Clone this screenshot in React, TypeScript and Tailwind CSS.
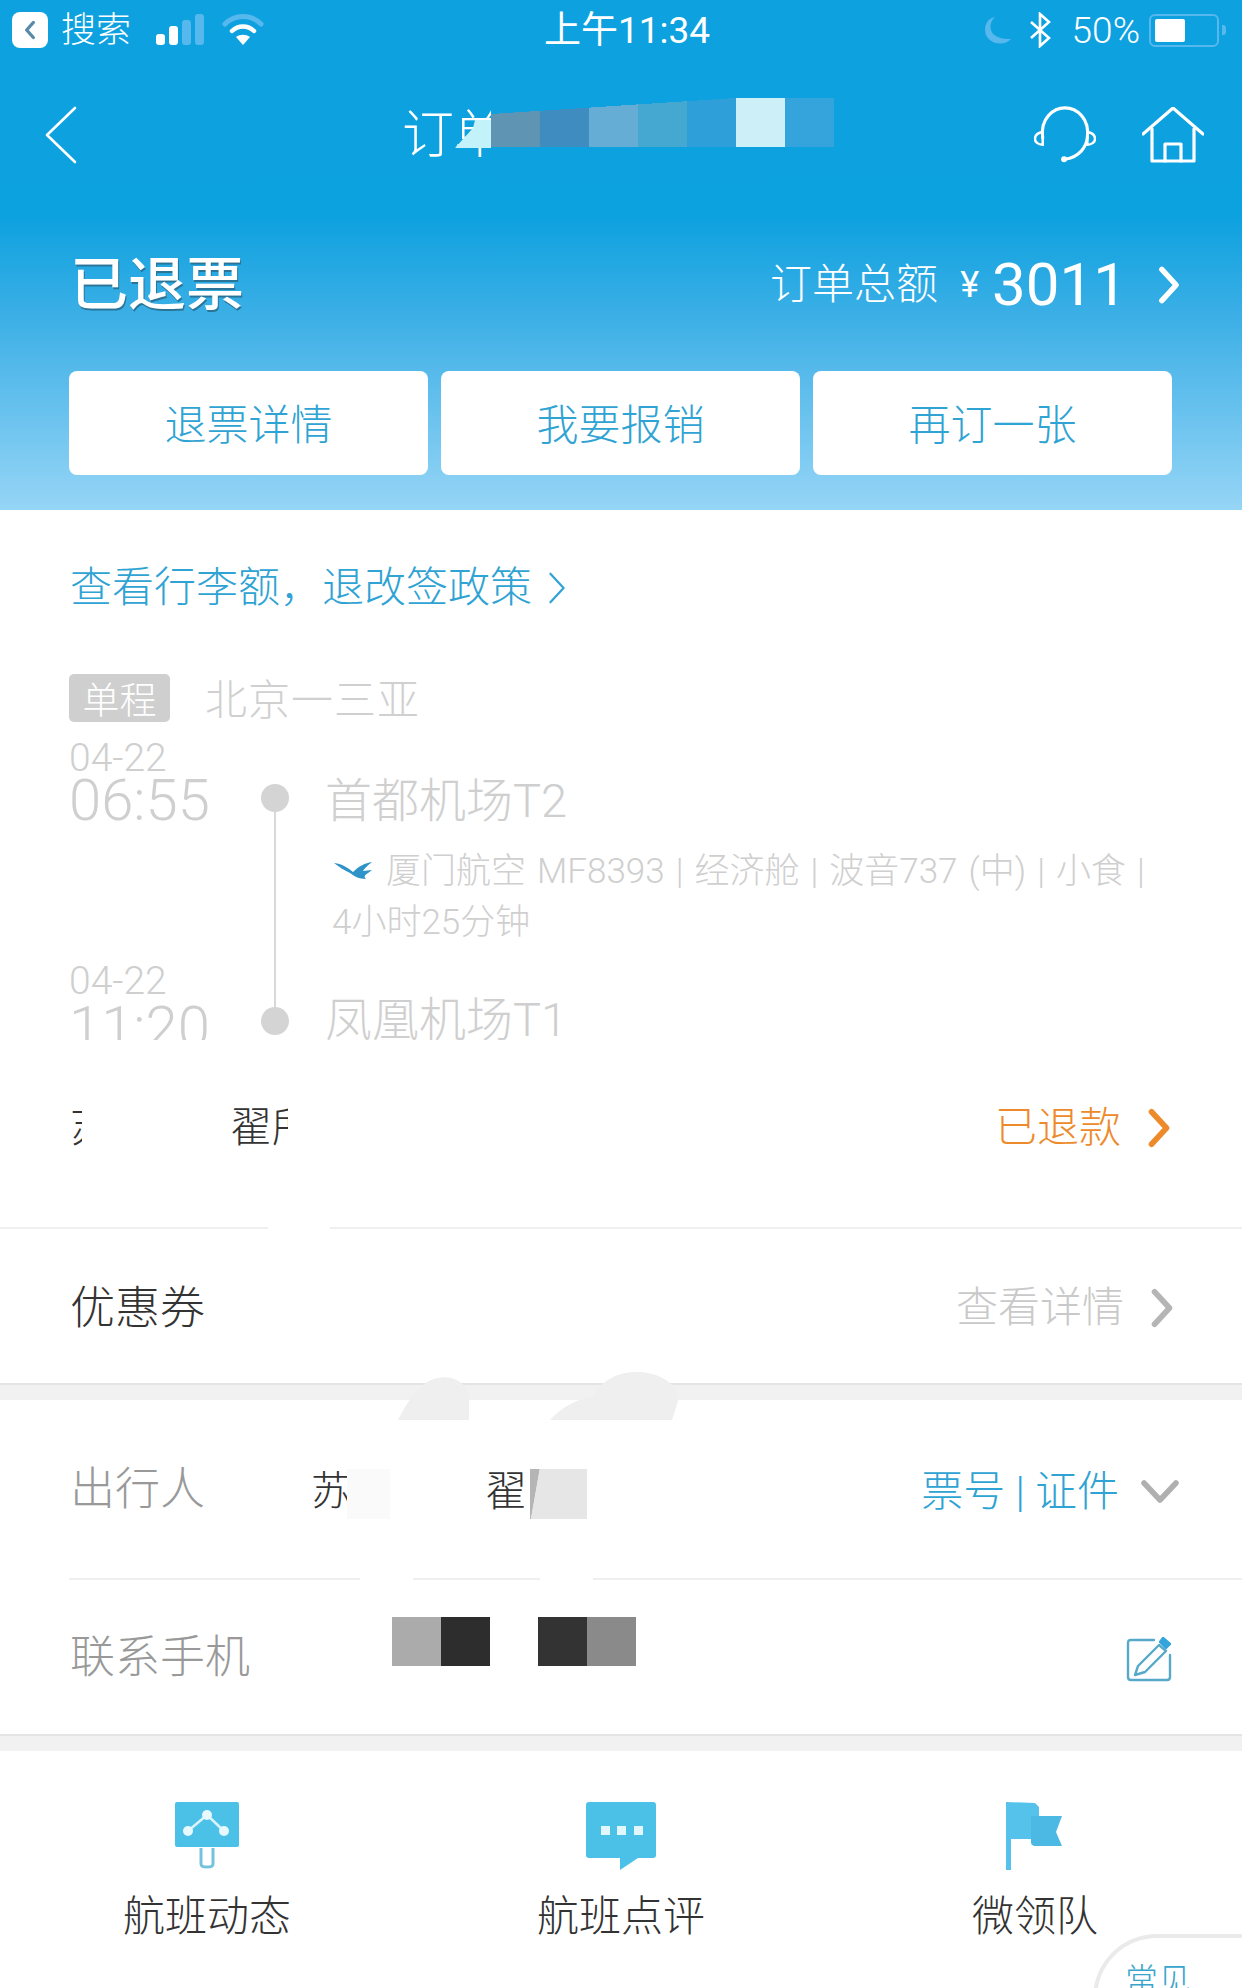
import React from 'react';

const Chevron = ({ className, width = 3 }: { className?: string; width?: number }) => (
    <svg viewBox="0 0 20 32" className={className} fill="none" stroke="currentColor" strokeWidth={width} strokeLinecap="round" strokeLinejoin="round">
        <path d="M4 3 L16 16 L4 29" />
    </svg>
);

const StatusBar: React.FC = () => (
    <div className="grid h-[60px] grid-cols-3 items-center pr-[16px] pl-[12px] text-white">
        <div className="flex items-center">
            <div className="flex h-[36px] w-[36px] items-center justify-center rounded-[8px] bg-white">
                <svg viewBox="0 0 16 24" className="h-[20px] w-[14px]" fill="none" stroke="#5b8aa8" strokeWidth={4} strokeLinecap="round" strokeLinejoin="round">
                    <path d="M12 3 L4 12 L12 21" />
                </svg>
            </div>
            <span className="ml-[13px] text-[35px] leading-none font-light">搜索</span>
            <svg viewBox="0 0 50 32" className="ml-[24px] h-[32px] w-[50px]">
                <rect x="1" y="20" width="9" height="11" rx="3" fill="#fff" />
                <rect x="14" y="12" width="9" height="19" rx="3" fill="#fff" />
                <rect x="27" y="6" width="9" height="25" rx="3" fill="#56b8ec" />
                <rect x="40" y="0" width="9" height="31" rx="3" fill="#56b8ec" />
            </svg>
            <svg viewBox="0 0 42 32" className="ml-[17px] h-[32px] w-[42px]" fill="none" strokeLinecap="round">
                <path d="M3 10 C13 0 29 0 39 10" stroke="#56b8ec" strokeWidth="5" />
                <path d="M10 17 C16 11 26 11 32 17" stroke="#fff" strokeWidth="4.5" />
                <path d="M14 23 L21 31 L28 23 C24 20 18 20 14 23 Z" fill="#fff" />
            </svg>
        </div>
        <div className="pl-[16px] text-center text-[37px] leading-none font-normal">上午11:34</div>
        <div className="flex items-center justify-end">
            <svg viewBox="0 0 28 28" className="h-[28px] w-[28px]">
                <path d="M11 1 C3 8 4 24 27 23 C19 32 1 27 1 14 C1 7 5 2 11 1 Z" fill="#56b8ec" />
            </svg>
            <svg viewBox="0 0 24 36" className="ml-[17px] h-[36px] w-[24px]" fill="none" stroke="#fff" strokeWidth="2.6">
                <path d="M2 10 L20 26 L11 34 L11 2 L20 10 L2 26" />
            </svg>
            <span className="ml-[19px] text-[37px] leading-none font-light">50%</span>
            <div className="ml-[9px] flex h-[33px] w-[70px] items-center rounded-[6px] border-[2px] border-[#56b8ec] px-[4px]">
                <div className="h-[23px] w-[30px] rounded-[2px] bg-white" />
            </div>
            <div className="ml-[3px] h-[10px] w-[4px] rounded-r-[3px] bg-[#56b8ec]" />
        </div>
    </div>
);

const mosaic = ['bg-[#5f95b3]', 'bg-[#3e8cc0]', 'bg-[#66add6]', 'bg-[#45a8d0]', 'bg-[#2f9fd9]', 'bg-[#cdeff8]', 'bg-[#35a4dc]'];

const NavBar: React.FC = () => (
    <div className="relative flex h-[150px] items-center justify-between pr-[38px] pl-[44px] text-white">
        <svg viewBox="0 0 34 58" className="h-[58px] w-[34px]" fill="none" stroke="currentColor" strokeWidth="2.6" strokeLinecap="round" strokeLinejoin="round">
            <path d="M31 2 L3 29 L31 56" />
        </svg>
        <span className="absolute top-[50px] left-[402px] text-[52px] leading-none font-light">订单</span>
        {/* mosaic over the title */}
        <svg viewBox="0 0 36 28" className="absolute top-[60px] left-[455px] h-[28px] w-[36px]">
            <path d="M0 28 L18 8 L20 0 L36 0 L36 28 Z" fill="#c4f2fb" />
        </svg>
        <div className="absolute top-[38px] left-[491px] flex h-[49px]">
            {mosaic.map((c, i) => (
                <div key={i} className={`h-full w-[49px] ${c}`} />
            ))}
        </div>
        <div className="absolute top-[38px] left-[491px] h-[16px] w-[245px] bg-[linear-gradient(to_bottom_right,#0da1df_50%,transparent_50%)]" />
        <div className="flex items-center gap-[46px]">
            <svg viewBox="0 0 64 58" className="h-[58px] w-[62px]" fill="none" stroke="currentColor" strokeWidth="3.2" strokeLinecap="round">
                <path d="M9 32 C6 12 20 1 32 1 C44 1 58 12 55 32 C54 41 47 52 32 54" />
                <path d="M9 26 C3 27 1 30 1 33 C1 36 4 39 9 39 Z" strokeWidth="2.6" />
                <path d="M55 26 C61 27 63 30 63 33 C63 36 60 39 55 39 Z" strokeWidth="2.6" />
                <circle cx="31" cy="54" r="3" fill="currentColor" stroke="none" />
            </svg>
            <svg viewBox="0 0 62 56" className="h-[56px] w-[62px]" fill="none" stroke="currentColor" strokeWidth="3.2" strokeLinecap="round" strokeLinejoin="round">
                <path d="M1 27 L31 1 L61 27" />
                <path d="M10 22 L10 54 L52 54 L52 22" />
                <path d="M23 54 L23 37 L39 37 L39 54" />
            </svg>
        </div>
    </div>
);

const Header: React.FC = () => (
    <header className="h-[510px] bg-[linear-gradient(to_bottom,#0ea1e0_0%,#0ca1df_42%,#3cafe6_62%,#96d5f6_100%)]">
        <StatusBar />
        <NavBar />
        <div className="flex h-[146px] items-center justify-between pt-[4px] pr-[61px] pl-[70px] text-white">
            <span className="text-[58px] leading-none font-medium [text-shadow:1px_2px_0_#2a7498]">已退票</span>
            <div className="flex items-center">
                <span className="text-[42px] leading-none font-light">订单总额</span>
                <span className="ml-[12px] w-[29px] text-right text-[36px] leading-none">¥</span>
                <span className="ml-[13px] text-[60px] leading-none">3011</span>
                <Chevron className="ml-[30px] h-[40px] w-[24px]" width={4.5} />
            </div>
        </div>
        <div className="mt-[15px] flex gap-[13px] px-[69px]">
            {['退票详情', '我要报销', '再订一张'].map(label => (
                <button key={label} className="h-[104px] w-[359px] rounded-[8px] bg-white pt-[4px] text-[42px] font-light text-[#2fa3d3]">
                    {label}
                </button>
            ))}
        </div>
    </header>
);

const Flight: React.FC = () => (
    <div className="flex h-[300px] overflow-hidden pl-[69px] text-[#cfcfcf]">
        <div className="w-[192px]">
            <div className="h-[36px] text-[39px] leading-[36px] font-light">04-22</div>
            <div className="mt-[-6px] h-[60px] text-[58px] leading-[60px] font-light">06:55</div>
            <div className="mt-[133px] h-[36px] text-[39px] leading-[36px] font-light">04-22</div>
            <div className="mt-[-2px] h-[60px] text-[58px] leading-[60px] font-light">11:20</div>
        </div>
        <div className="flex w-[28px] flex-col items-center pt-[44px]">
            <div className="h-[28px] w-[28px] rounded-full bg-[#d4d4d4]" />
            <div className="h-[195px] w-[2px] bg-[#d8d8d8]" />
            <div className="h-[28px] w-[28px] shrink-0 rounded-full bg-[#d4d4d4]" />
        </div>
        <div className="ml-[36px] flex-1 pt-[31px]">
            <div className="h-[60px] text-[47px] leading-[60px] font-light">首都机场T2</div>
            <div className="mt-[14px] flex h-[52px] items-center pl-[8px] text-[35px] leading-none font-light whitespace-nowrap">
                <svg viewBox="0 0 40 20" className="h-[20px] w-[40px]">
                    <path d="M1 2 C10 3 15 7 20 11 C26 5 32 2 39 1 C34 5 31 8 30 10 L39 9 C35 13 29 14 33 18 C26 18 21 15 17 12 C11 9 6 6 1 2 Z" fill="#2d93c9" />
                </svg>
                <span className="ml-[13px] [word-spacing:2.5px]">厦门航空 MF8393 | 经济舱 | 波音737 (中) | 小食 |</span>
            </div>
            <div className="h-[52px] pl-[7px] text-[35px] leading-[52px] font-light">4小时25分钟</div>
            <div className="mt-[41px] h-[60px] text-[47px] leading-[60px] font-light">凤凰机场T1</div>
        </div>
    </div>
);

const BottomAction = ({ label, children }: { label: string; children: React.ReactNode }) => (
    <div className="flex w-[414px] flex-col items-center">
        <div className="flex h-[68px] items-center">{children}</div>
        <div className="mt-[22px] text-[42px] leading-[50px] font-light text-[#333]">{label}</div>
    </div>
);

export default function App() {
    return (
        <div className="relative h-[1988px] w-[1242px] overflow-hidden bg-white font-['Roboto','Noto_Sans_CJK_SC',sans-serif]">
            <Header />

            <div className="flex h-[152px] items-center pt-[4px] pl-[70px] text-[#2fa3d3]">
                <span className="text-[42px] leading-none font-light">查看行李额，退改签政策</span>
                <Chevron className="ml-[14px] h-[36px] w-[22px]" width={2} />
            </div>

            <div className="flex h-[72px] items-center pl-[69px]">
                <span className="flex h-[48px] w-[101px] items-center justify-center rounded-[5px] bg-[#cfcfcf] pt-[6px] text-[37px] leading-none font-light text-white">单程</span>
                <span className="ml-[35px] pt-[6px] text-[42px] leading-none tracking-[1px] font-light text-[#d0d0d0]">北京一三亚</span>
            </div>

            <div className="mt-[6px]">
                <Flight />
            </div>

            {/* passenger line, mostly blanked out in the picture */}
            <div className="flex h-[187px] items-start justify-between pt-[58px] pr-[70px] pl-[70px]">
                <div className="flex h-[60px] items-center text-[42px] leading-none font-light text-[#333]">
                    <span className="w-[12px] overflow-hidden">苏</span>
                    <span className="ml-[148px] w-[58px] overflow-hidden whitespace-nowrap">翟所</span>
                </div>
                <div className="flex h-[60px] items-center text-[#ed8a2b]">
                    <span className="text-[42px] leading-none font-light">已退款</span>
                    <Chevron className="ml-[25px] h-[40px] w-[26px]" width={4.5} />
                </div>
            </div>
            <div className="relative h-[2px] bg-[#efefef]">
                <div className="absolute top-0 left-[268px] h-[2px] w-[62px] bg-white" />
            </div>

            <div className="flex h-[154px] items-center justify-between pt-[4px] pr-[67px] pl-[70px]">
                <span className="text-[45px] leading-none font-light text-[#333]">优惠券</span>
                <div className="flex items-center text-[#c9c9c9]">
                    <span className="text-[42px] leading-none font-light">查看详情</span>
                    <Chevron className="ml-[25px] h-[40px] w-[26px] text-[#b5b5b5]" width={4.5} />
                </div>
            </div>
            <div className="h-[17px] border-t-[2px] border-[#e4e4e4] bg-[#f1f1f1]" />

            <div className="flex h-[178px] items-center justify-between pr-[63px] pl-[70px]">
                <div className="mt-[10px] flex items-center">
                    <span className="mb-[10px] w-[241px] text-[45px] leading-none font-light text-[#999]">出行人</span>
                    <span className="mb-[4px] w-[36px] text-[40px] leading-none font-light text-[#333]">苏</span>
                    <span className="h-[50px] w-[43px] bg-[#fafafa]" />
                    <span className="mb-[4px] ml-[95px] w-[45px] text-[42px] leading-none font-light text-[#333]">翟</span>
                    <span className="h-[50px] w-[57px] bg-[linear-gradient(100deg,#b5b5b5_14%,#e6e6e6_15%)]" />
                </div>
                <div className="flex items-center pt-[6px]">
                    <span className="text-[42px] leading-none font-light text-[#2fa3d3]">票号 | 证件</span>
                    <svg viewBox="0 0 38 24" className="ml-[22px] h-[24px] w-[38px]" fill="none" stroke="#b0b0b0" strokeWidth="5.5" strokeLinecap="round" strokeLinejoin="round">
                        <path d="M3 3 L19 20 L35 3" />
                    </svg>
                </div>
            </div>
            <div className="relative ml-[69px] h-[2px] bg-[#efefef]">
                <div className="absolute top-0 left-[291px] h-[2px] w-[53px] bg-white" />
                <div className="absolute top-0 left-[471px] h-[2px] w-[53px] bg-white" />
            </div>

            <div className="flex h-[154px] justify-between pr-[70px] pl-[70px]">
                <div className="flex items-start">
                    <span className="mt-[55px] w-[322px] text-[45px] leading-none font-light text-[#999]">联系手机</span>
                    <div className="mt-[37px] flex">
                        <div className="h-[49px] w-[49px] bg-[#ababab]" />
                        <div className="h-[49px] w-[49px] bg-[#2d2d2d]" />
                        <div className="ml-[48px] h-[49px] w-[49px] bg-[#333]" />
                        <div className="h-[49px] w-[49px] bg-[#8a8a8a]" />
                    </div>
                </div>
                <svg viewBox="0 0 46 46" className="mt-[56px] h-[46px] w-[46px]" fill="none" stroke="#57a9c9" strokeWidth="2.4" strokeLinecap="round" strokeLinejoin="round">
                    <path d="M28 4 L5 4 C3 4 2 5 2 7 L2 41 C2 43 3 44 5 44 L41 44 C43 44 44 43 44 41 L44 19" />
                    <path d="M33 9 L40 15 L19 36 L9 39 L12 30 Z" />
                    <path d="M37 2 L44 8 L40 12 L34 6 Z" fill="#35a4dc" stroke="#35a4dc" />
                </svg>
            </div>
            <div className="h-[17px] border-t-[2px] border-[#e4e4e4] bg-[#f1f1f1]" />

            <div className="flex pt-[51px]">
                <BottomAction label="航班动态">
                    <svg viewBox="0 0 64 68" className="h-[68px] w-[64px]">
                        <rect x="0" y="0" width="64" height="45" rx="2" fill="#4cc1e8" />
                        <path d="M26 46 L26 62 C26 66 38 66 38 62 L38 46" fill="none" stroke="#74c3dc" strokeWidth="3" />
                        <path d="M13 29 L32 13 L49 29" fill="none" stroke="#d8f3fb" strokeWidth="2.5" />
                        <circle cx="32" cy="13" r="5" fill="#e8f9fd" />
                        <circle cx="13" cy="29" r="5" fill="#e8f9fd" />
                        <circle cx="49" cy="29" r="5" fill="#e8f9fd" />
                    </svg>
                </BottomAction>
                <BottomAction label="航班点评">
                    <svg viewBox="0 0 70 68" className="h-[68px] w-[70px]">
                        <path d="M3 0 L67 0 C69 0 70 1 70 3 L70 53 C70 55 69 56 67 56 L52 56 L34 68 L34 56 L3 56 C1 56 0 55 0 53 L0 3 C0 1 1 0 3 0 Z" fill="#4cc1e8" />
                        <rect x="15" y="24" width="9" height="9" fill="#e2f7fc" />
                        <rect x="31" y="24" width="9" height="9" fill="#e2f7fc" />
                        <rect x="48" y="24" width="9" height="9" fill="#e2f7fc" />
                    </svg>
                </BottomAction>
                <BottomAction label="微领队">
                    <svg viewBox="0 0 58 68" className="h-[68px] w-[58px]">
                        <path d="M0 0 L29 1 L33 5 L33 37 L5 37 L5 68 L0 68 Z" fill="#54c2ea" />
                        <path d="M25 14 L56 14 L50 30 L56 44 L30 44 C26 44 25 42 25 40 Z" fill="#4cb9e4" />
                    </svg>
                </BottomAction>
            </div>

            {/* smudges left by the editing over the grey band */}
            <svg viewBox="0 0 290 50" className="absolute top-[1371px] left-[398px] h-[50px] w-[290px]" fill="#efefef">
                <path d="M0 49 C10 30 22 10 40 7 C55 4 68 12 71 24 L71 49 Z" />
                <path d="M152 49 C165 35 180 28 195 25 C205 8 220 1 240 1 C268 2 282 18 280 30 L274 49 Z" />
            </svg>

            {/* floating help bubble, cut by the page edge */}
            <div className="absolute top-[1934px] left-[1093px] h-[120px] w-[200px] rounded-tl-[64px] border-t-[4px] border-l-[4px] border-[#eaeaea] bg-white pt-[26px] pl-[28px] text-[33px] leading-none font-light text-[#3aa5cc]">
                常见
            </div>
        </div>
    );
}
